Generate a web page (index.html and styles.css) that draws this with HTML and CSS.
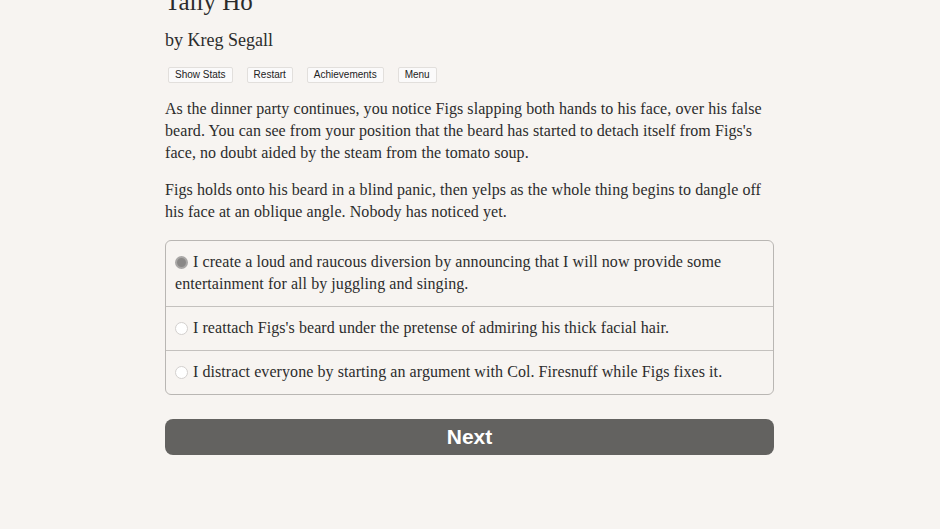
FILE: index.html
```html
<!DOCTYPE html>
<html>
<head>
<meta charset="utf-8">
<link rel="stylesheet" href="styles.css">
</head>
<body>
<main class="page">
  <h1 class="title">Tally Ho</h1>
  <h2 class="byline">by Kreg Segall</h2>
  <nav class="toolbar">
    <button class="tool">Show Stats</button>
    <button class="tool">Restart</button>
    <button class="tool">Achievements</button>
    <button class="tool">Menu</button>
  </nav>
  <p class="para">As the dinner party continues, you notice Figs slapping both hands to his face, over his false beard. You can see from your position that the beard has started to detach itself from Figs's face, no doubt aided by the steam from the tomato soup.</p>
  <p class="para">Figs holds onto his beard in a blind panic, then yelps as the whole thing begins to dangle off his face at an oblique angle. Nobody has noticed yet.</p>
  <div class="choices">
    <label class="choice"><span class="radio checked"></span>I create a loud and raucous diversion by announcing that I will now provide some entertainment for all by juggling and singing.</label>
    <label class="choice"><span class="radio"></span>I reattach Figs's beard under the pretense of admiring his thick facial hair.</label>
    <label class="choice"><span class="radio"></span>I distract everyone by starting an argument with Col. Firesnuff while Figs fixes it.</label>
  </div>
  <button class="next">Next</button>
</main>
</body>
</html>
```
FILE: styles.css
```css
html, body {
  margin: 0;
  padding: 0;
  background: #f7f4f1;
}
body {
  font-family: "Liberation Serif", "Times New Roman", serif;
  color: #2c2c2c;
  overflow: hidden;
}
.page {
  width: 609px;
  margin-left: 165px;
}
.title {
  font-size: 25px;
  line-height: 30px;
  font-weight: normal;
  margin: -13px 0 0 0;
}
.byline {
  font-size: 18px;
  line-height: 22px;
  font-weight: normal;
  margin: 12px 0 0 0;
}
.toolbar {
  display: flex;
  gap: 14px;
  margin-top: 16px;
  padding-left: 3px;
}
.tool {
  font-family: "Liberation Sans", Arial, sans-serif;
  font-size: 10px;
  line-height: 14px;
  color: #222;
  background: #fbfafa;
  border: 1px solid #e2dfdc;
  border-radius: 2px;
  padding: 0 6px;
  height: 16px;
}
.para {
  font-size: 16px;
  letter-spacing: 0.07px;
  line-height: 22px;
  margin: 15px 0 0 0;
}
.para + .para {
  margin-top: 15px;
}
.choices {
  margin-top: 17px;
  border: 1px solid #b9b6b3;
  border-radius: 6px;
}
.choice {
  display: block;
  font-size: 16px;
  letter-spacing: 0.07px;
  line-height: 22px;
  padding: 10px 10px 11px 9px;
}
.choice + .choice {
  border-top: 1px solid #c4c1be;
}
.radio {
  display: inline-block;
  width: 13px;
  height: 13px;
  border-radius: 50%;
  border: 1px solid #d3d0ce;
  background: #fff;
  margin-right: 5px;
  vertical-align: -2px;
  box-sizing: border-box;
}
.radio.checked {
  background: #8a8887;
  border: 2px solid #a9a7a6;
}
.next {
  display: block;
  width: 609px;
  height: 36px;
  margin-top: 24px;
  background: #636260;
  color: #fff;
  border: none;
  border-radius: 8px;
  font-family: "Liberation Sans", Arial, sans-serif;
  font-weight: bold;
  font-size: 21px;
}
```
